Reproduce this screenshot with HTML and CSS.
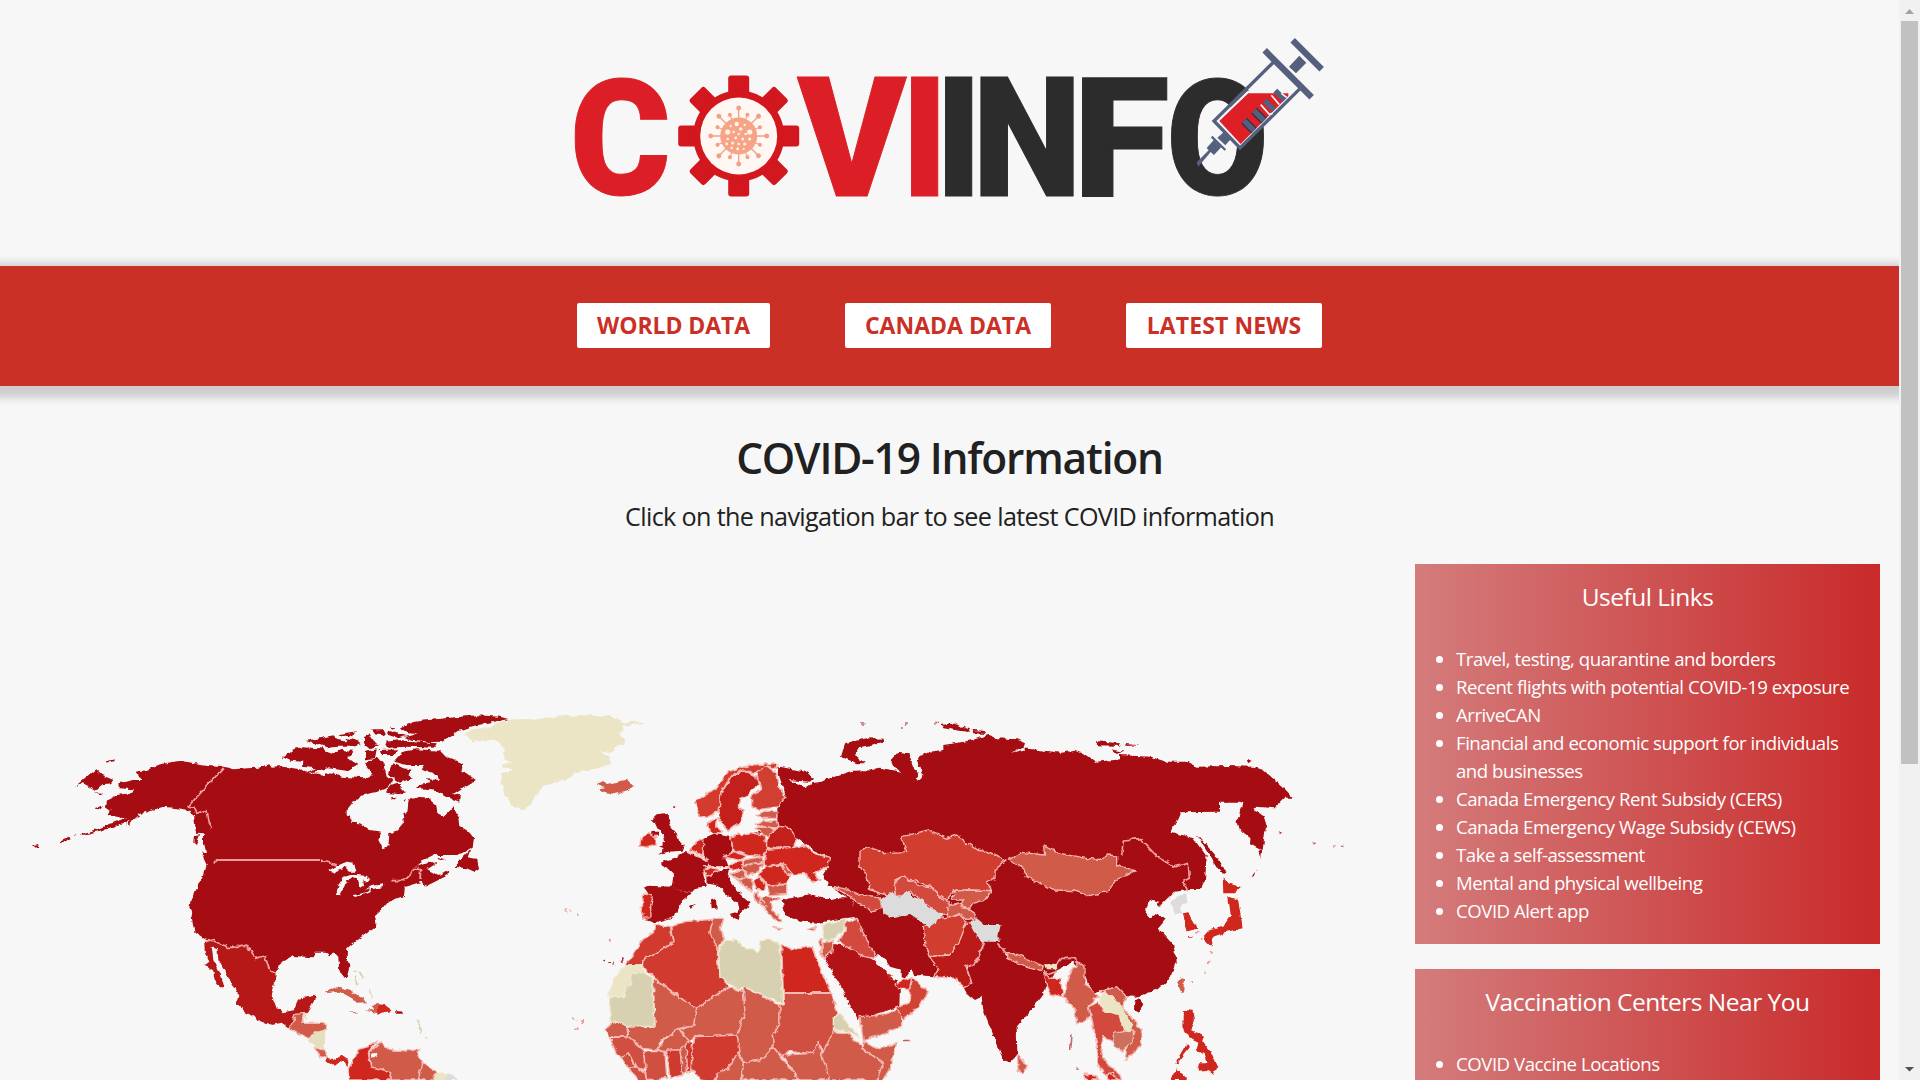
FILE: index.html
```html
<!DOCTYPE html>
<html lang="en">
<head>
<meta charset="utf-8">
<title>COVIINFO</title>
<link rel="stylesheet" href="styles.css">
</head>
<body>
<div class="page">
<header class="header">
<svg class="logo" viewBox="575 30 749 175" role="img" aria-label="COVIINFO">
  <g class="logo-letters logo-red">
    <text transform="translate(570 194) scale(.92 .967)">C</text>
    <text transform="translate(797.5 195.500) scale(.985 1)">V</text>
    <text transform="translate(901.500 195.500) scale(.92 1)">I</text>
  </g>
  <g class="logo-letters logo-black">
    <text transform="translate(935.500 195.500) scale(.92 1)">I</text>
    <text transform="translate(972.500 195.500) scale(.93 1)">N</text>
    <text transform="translate(1073 195.500) scale(1.06 1)">F</text>
    <text transform="translate(1166.500 194) scale(.885 .967)">O</text>
  </g>
  <g transform="translate(738.7 136)">
    <g fill="#d3171e">
      <g id="teeth"><rect x="-10.5" y="-60.5" width="21" height="121" rx="3"/><rect x="-60.5" y="-10.5" width="121" height="21" rx="3"/></g>
      <use href="#teeth" transform="rotate(45)"/>
      <circle r="45.5"/>
    </g>
    <circle r="38.5" fill="#fff7f3"/>
    <g stroke="#f0a184" stroke-width="1.3" fill="#f0a184">
      <g id="spike"><path d="M0-28V28M-28 0H28"/><circle cy="-28" r="1.8"/><circle cy="28" r="1.8"/><circle cx="-28" r="1.8"/><circle cx="28" r="1.8"/></g>
      <use href="#spike" transform="rotate(45)"/>
      <use href="#spike" transform="rotate(22.5) scale(.82)"/>
      <use href="#spike" transform="rotate(67.5) scale(.82)"/>
    </g>
    <circle r="18.5" fill="#f6a386"/>
    <g fill="#fff3e8"><circle cx="-11" cy="-4" r="2.6"/><circle cx="11" cy="-4" r="2.6"/><circle cx="-2" cy="-12" r="2.2"/><circle cx="2" cy="-7" r="1.8"/><circle cx="-5" cy="-4" r="1.2"/><circle cx="6" cy="-11" r="1.2"/><circle cx="-8" cy="-10" r="1.2"/><circle cx="7" cy="-2" r="1.3"/><circle cx="0" cy="-2" r="1.2"/><circle cx="-3" cy="2" r="1.4"/><circle cx="4" cy="3" r="1.5"/><circle cx="-11" cy="3" r="1.3"/><circle cx="11" cy="3" r="1.5"/><circle cx="-12" cy="8" r="1.4"/><circle cx="-6" cy="7" r="1.5"/><circle cx="0" cy="8" r="1.3"/><circle cx="6" cy="8" r="1.6"/><circle cx="-1" cy="13" r="1.4"/><circle cx="-7" cy="12" r="1.2"/><circle cx="5" cy="13" r="1.1"/></g>
  </g>
  <g transform="translate(940 20) scale(.33333)" fill="#55607f">
    <path fill="#f7f7f7" d="M1005 130L1082 205 1050 232 925 218Z"/>
    <path fill="none" stroke="#f7f7f7" stroke-width="12" d="M838 303L925 218H1020L1045 225 900 372Z"/>
    <path fill="#de1f26" d="M838 303L925 220H1045L1045 228 902 372Z"/>
    <path fill="none" stroke="#55607f" stroke-width="10" d="M1003 124L822 303 900 384 1080 206"/>
    <path fill="none" stroke="#353449" stroke-width="24" d="M912 302L942 332M942 272L972 302"/>
    <path fill="none" stroke="#55607f" stroke-width="16" d="M912 302L942 332M942 272L972 302M974 242L1002 270M1006 212L1034 240"/>
    <path fill="none" stroke="#f7f7f7" stroke-width="5" d="M962 254L988 283 998 280M994 226L1018 254M1024 220L1040 232"/>
    <path fill="none" stroke="#55607f" stroke-width="19" d="M974 91L1115 232M1058 61L1145 148"/>
    <path d="M1078 107L1099 128 1068 160 1047 140Z"/>
    <path d="M851 337L872 358 856 376 832 353Z"/>
    <path fill="none" stroke="#55607f" stroke-width="7" d="M815 350L856 390"/>
    <path d="M822 359L844 381 822 405 812 396 775 440 770 427 806 391 800 384Z"/>
  </g>
</svg>
</header>

<nav class="nav">
  <a class="nav-link nav-world">WORLD DATA</a>
  <a class="nav-link nav-canada">CANADA DATA</a>
  <a class="nav-link nav-news">LATEST NEWS</a>
</nav>

<main>
<h1 class="title">COVID-19 Information</h1>
<p class="subtitle">Click on the navigation bar to see latest COVID information</p>
<div class="columns">
<svg class="map" viewBox="0 564 1380 516" role="img" aria-label="World map of COVID-19 cases">
  <defs>
    <filter id="coast" filterUnits="userSpaceOnUse" x="0" y="564" width="1380" height="516" color-interpolation-filters="sRGB">
      <feTurbulence type="fractalNoise" baseFrequency=".16" numOctaves="2" seed="4"/>
      <feDisplacementMap in="SourceGraphic" scale="5" xChannelSelector="R" yChannelSelector="G"/>
    </filter>
  </defs>
  <g filter="url(#coast)">
  <!-- North America -->
  <g transform="translate(0 700) scale(.33333)">
    <g class="dark">
      <path d="M410 215L440 210 475 195 510 187 545 182 575 188 620 195 665 198 700 208 740 205 775 203 808 193 815 203 850 200 900 208 915 218 960 222 970 232 980 220 1010 222 1025 230 1095 235 1120 225 1090 190 1135 172 1150 190 1160 230 1180 240 1165 262 1130 276 1090 285 1060 305 1040 330 1040 345 1050 350 1052 368 1080 370 1110 390 1143 395 1135 420 1148 445 1165 438 1168 400 1195 390 1212 370 1208 345 1222 335 1225 305 1235 293 1255 290 1285 293 1308 312 1312 340 1330 348 1360 322 1375 350 1378 380 1410 400 1422 415 1418 440 1395 455 1365 465 1300 465 1265 483 1250 500 1290 483 1312 486 1290 510 1315 525 1348 512 1345 525 1275 560 1265 545 1215 560 1212 587 1165 605 1145 630 1128 645 1125 680 1100 700 1070 720 1042 745 1040 770 1048 800 1040 830 1030 834 1017 805 1015 770 1005 760 985 766 975 758 945 758 938 772 880 768 840 790 830 822 810 815 795 770 765 775 750 745 720 735 685 742 640 722 612 715 583 695 578 670 574 640 568 625 572 600 585 570 610 530 620 495 603 458 618 455 612 430 612 400 588 398 582 345 565 330 530 325 490 320 430 338 370 366 350 372 375 355 322 345 332 332 315 320 318 300 350 285 400 278 405 268 357 265 355 250 400 240 425 240Z"/>
      <path d="M224 260L286 208 305 225 340 240 333 250 308 253 284 272 262 258 245 250ZM318 183L345 178 343 184 320 188ZM282 280L310 281 300 286ZM282 325L305 318 300 330ZM240 403L300 384 360 360 415 342 418 348 385 374 375 376 390 362 310 390 245 406ZM430 332L470 312 485 312 440 338ZM176 423L212 408 214 414 180 427ZM100 435L115 432 114 439 102 440ZM220 407L230 405 226 409ZM582 406L597 403 588 435 580 428Z"/>
      <path d="M848 172L880 148 905 142 960 145 1000 160 1025 150 1060 152 1045 175 1075 195 1045 213 985 205 905 222 945 205 908 200 910 185 870 182ZM920 123L1000 106 1015 120 1085 133 1060 140 1010 140 985 143ZM1013 103L1072 94 1045 112ZM1035 125L1055 112 1085 135ZM1092 108L1105 103 1118 125 1140 135 1110 145 1092 130ZM1110 88L1150 88 1158 104 1125 100ZM1165 95L1190 100 1220 108 1195 115 1165 105ZM1200 82L1240 66 1265 62 1350 53 1430 46 1500 50 1525 57 1480 66 1420 78 1370 95 1330 125 1290 126 1265 122 1240 120 1215 112 1250 103 1225 100 1210 92ZM1155 125L1200 120 1310 130 1305 143 1220 140 1165 143ZM1170 80L1183 82 1175 87ZM1095 155L1130 148 1125 175 1095 178ZM1140 150L1195 148 1180 165 1145 165ZM1210 155L1250 148 1320 152 1335 168 1390 192 1385 210 1428 240 1390 262 1355 285 1380 280 1378 305 1340 290 1300 268 1248 265 1255 255 1292 250 1280 238 1320 240 1300 220 1265 208 1275 195 1220 195 1183 185ZM1180 190L1210 205 1240 210 1225 225 1235 235 1200 248 1165 225ZM1178 250L1190 246 1218 277 1200 283 1155 278ZM1172 292L1190 290 1178 299ZM1208 300L1218 298 1212 306Z"/>
      <path d="M1412 447L1402 475 1432 480 1437 508 1425 516 1400 505 1362 500 1385 475ZM1312 470L1338 478 1320 481ZM1188 933L1210 935 1205 941 1190 941Z"/>
    </g>
    <g fill="#f7f7f7"><path d="M985 512L1010 498 1040 485 1060 488 1070 515 1050 515 1035 502 1003 515ZM1008 585L1015 555 1032 530 1055 524 1100 527 1112 540 1103 545 1090 537 1092 555 1078 565 1070 535 1058 530 1040 545 1020 585ZM1060 586L1105 575 1110 565 1090 570 1115 558 1150 553 1148 562 1115 568 1105 580 1065 592ZM1173 377L1190 372 1182 385ZM1265 480L1300 478 1330 483 1300 488 1320 500 1295 515 1282 508 1310 490Z"/></g>
    <path fill="#b61817" d="M612 720L640 722 685 742 720 735 738 735 750 750 765 775 795 768 810 815 830 822 822 860 815 885 830 925 850 937 885 930 900 895 945 887 947 895 920 940 885 945 870 985 845 968 815 975 780 962 735 935 710 910 715 885 705 865 680 825 655 780 652 745 635 738 640 780 660 825 670 862 660 862 643 840 640 815 615 795 628 785 615 760Z"/>
    <path class="land orange" d="M885 943L915 940 905 970 975 970 980 988 945 998 928 1012 900 1005 870 985ZM943 1043L975 1050 985 1075 960 1070Z"/>
    <path fill="#e6dfbd" d="M980 988L972 1045 945 1040 925 1018 948 998ZM910 945L925 935 918 965Z"/>
    <path class="orange" d="M975 880L1010 862 1050 872 1105 907 1070 908 1050 888 1020 875ZM1048 933L1075 940 1060 943ZM1098 932L1120 930 1113 915 1132 913 1132 940Z"/>
    <path class="red" d="M1132 913L1155 915 1178 932 1145 938 1132 945ZM980 1075L1000 1080 1025 1064 1048 1080 1042 1098 1030 1080 1005 1100 980 1085Z"/>
    <path class="red land" d="M1046 1140L1045 1105 1065 1075 1075 1048 1105 1040 1132 1022 1105 1060 1112 1100 1172 1115 1170 1140Z"/>
    <path class="orange land" d="M1110 1055L1145 1025 1165 1048 1215 1053 1262 1048 1250 1060 1265 1085 1255 1140H1170L1172 1115 1112 1100ZM1265 1085L1308 1118 1300 1140H1255Z"/>
    <circle cx="1124" cy="1064" r="8" fill="#f7f7f7"/>
    <path fill="#ebe5c5" d="M1308 1118L1345 1120 1335 1140H1300Z"/><path fill="#dcdcdc" d="M1345 1120L1378 1140H1335Z"/>
    <path class="border" d="M672 202L564 320 580 325 588 340 618 332 625 370 634 382M960 480L1010 495M648 480L640 492M1173 542H1210L1248 505 1262 510 1260 540M612 722L640 722 685 742H715L740 735 765 775 795 768 810 815 830 822"/>
    <path fill="none" stroke="#ddd3b4" stroke-width="5" d="M1060 812L1070 812M1078 812L1090 835M1066 830L1070 852M1112 868L1115 898M1255 960L1262 1000M1275 1012L1280 1015"/>
  </g>

  <!-- Greenland, Iceland and Atlantic islands -->
  <g transform="translate(440 700) scale(.33333)">
    <path fill="#ebe5c5" d="M73 100L100 88 150 82 180 65 215 58 300 58 325 52 380 48 420 45 500 48 535 55 540 68 580 65 621 66 580 74 545 80 552 90 535 95 550 115 555 135 525 140 525 150 505 158 480 155 510 170 508 192 470 205 400 222 370 240 310 258 285 290 260 330 235 320 215 318 195 285 182 250 185 225 220 208 190 202 188 190 222 190 195 180 188 165 195 150 180 130 150 120 100 125Z"/>
    <path class="orange" d="M470 250L490 240 500 252 558 240 581 258 565 270 525 283 490 275 475 265 492 262Z"/>
    <path fill="none" stroke="#ec9a94" stroke-width="7" d="M374 634h8M391 632h3M408 644h8M506 720h6M396 955h6M408 960h4M427 960v12M403 986h16"/>
    <path fill="none" stroke="#a9202c" stroke-width="6" d="M493 778v6M505 786h8M518 790l6 4M541 785l9-12M700 322h6"/>
  </g>

  <!-- Russia and China -->
  <g class="dark" transform="translate(860 700) scale(.33333)">
    <path d="M-262 204L-240 200 -165 215 -138 233 -150 245 -190 242 -215 240 -175 255 -165 265 -140 248 -115 245 -100 238 -60 225 -20 212 30 210 60 203 125 215 100 200 92 180 115 155 145 160 160 200 175 225 165 240 190 225 170 180 205 155 250 150 250 135 330 122 385 105 410 115 470 118 495 130 490 145 605 158 640 152 670 160 705 185 780 178 780 165 870 170 920 185 980 185 1010 200 1100 198 1180 200 1210 210 1268 260 1300 293 1275 293 1243 325 1190 320 1180 330 1215 380 1208 445 1135 385 1130 365 1150 310 1140 305 1080 305 1080 335 960 337 935 395 1000 415 1040 470 1035 540 1020 570 985 570 945 575 900 620 880 615 870 600 855 630 920 655 895 685 940 735 950 780 930 835 890 870 830 890 780 888 720 870 700 882 675 830 640 785 590 810 550 880 520 920 470 980 472 1060 450 1087 430 1080 370 930 365 890 345 900 320 880 310 860 325 800 240 830 165 825 155 808 135 835 110 828 75 780 40 765 0 700 -20 640 -20 605 -55 585 -90 560 -115 520 -95 498 -92 472 -140 450 -190 415 -210 385 -248 382 -248 325 -222 290 -250 205Z"/>
    <path d="M-57 170L-45 130 20 115 75 116 70 125 0 142 -15 165 15 190 -10 190ZM245 75L275 68 330 88 325 96 250 85ZM338 90L370 92 380 102 340 100ZM705 123L780 130 775 138 710 136ZM795 132L840 136 800 138ZM755 148L795 155 770 162ZM1160 180L1175 182 1165 190ZM1010 403L1075 475 1100 520 1080 515 1025 430ZM1195 455L1205 445 1200 475ZM1172 530L1182 515 1180 528ZM1252 392L1270 400 1260 398ZM823 905L835 895 850 912 838 938 822 930Z"/>
    <path d="M1208 345L1218 378 1208 450 1170 430 1180 330Z"/>
    <path fill="none" stroke="#c86c73" stroke-width="5" d="M0 72h14M120 84h8M134 72h10M225 68h12M1358 427h12M1420 438h4M1442 440h8M636 1005l-4 45M652 1100v6M1190 510l2 4"/>
    <path fill="#f7f7f7" d="M145 160L162 163 190 228 170 243 178 218ZM452 158L490 140 498 148ZM852 630L880 600 896 605 890 625 915 650 880 645 870 655ZM-50 205L-10 190 45 206 40 212Z"/>
  </g>

  <!-- Europe, Africa and the Middle East -->
  <g transform="translate(600 740) scale(.33333)">
    <g class="dark">
      <path d="M155 240L170 226 200 222 214 238 208 255 230 280 238 305 255 315 248 335 205 338 175 347 190 332 178 318 195 305 190 285 172 265 165 250ZM182 368L225 352 260 333 300 355 325 365 310 400 318 440 285 443 270 460 215 440 220 405ZM128 445L145 437 215 440 273 462 240 490 225 530 180 543 165 550 130 535 140 460ZM305 300L345 283 390 290 398 330 375 350 385 378 325 380 310 340ZM318 400L350 392 390 388 385 415 410 450 452 490 440 500 425 515 415 542 385 525 412 520 420 495 380 465 350 435 320 430ZM333 478L348 473 350 505 335 508ZM456 280L482 275 475 290ZM265 497L285 492 272 503ZM158 275h16v12h-20Z"/>
      <path d="M548 480L630 462 680 475 755 475 768 530 700 540 660 548 600 545 555 525Z"/>
      <path d="M763 500L795 520 840 520 900 535 910 690 870 680 830 640 800 590 775 540Z"/>
      <path fill="#b11317" d="M665 640L700 612 750 620 820 660 870 700 900 735 898 800 830 822 775 840 745 785 720 735Z"/>
    </g>
    <path class="water" d="M830 645L850 650 870 680 905 690 905 730 880 720 860 700Z"/>
    <path fill="#cf261d" d="M862 700L878 705 870 725ZM878 735L905 730 905 748Z"/>
    <path class="water" d="M560 470L570 430 600 397 650 420 700 440 722 465 690 478 630 462ZM635 405L670 395 665 412Z"/>
    <g class="land red">
      <path d="M122 318L128 290 150 278 168 292 168 315 145 322Z"/><path d="M130 462L160 465 152 500 153 533 125 535Z"/>
      <path fill="#d43a2d" d="M286 182L320 160 350 145 385 95 450 75 530 70 530 85 500 78 470 100 430 90 390 110 360 165 362 210 325 232 298 230Z"/>
      <path fill="#c4201b" d="M362 165L390 115 430 92 470 108 475 135 450 150 445 165 420 175 415 200 430 215 418 250 385 272 355 235Z"/>
      <path fill="#d13e32" d="M470 98L500 78 530 100 538 145 558 170 535 200 480 208 455 200 455 170 485 145 475 120Z"/>
      <path d="M323 250L352 232 350 262 368 275 345 282 328 275ZM270 328L300 298 312 300 308 350ZM392 290L450 278 492 285 500 330 490 350 440 345 400 330Z"/>
      <path fill="#c4201b" d="M495 320L508 285 535 262 570 265 590 295 580 322 510 325Z"/>
      <path d="M492 370L500 328 580 322 610 315 640 340 688 352 685 378 640 400 660 420 635 425 615 400 575 405 540 370 500 378ZM478 405L495 378 540 375 570 405 560 432 500 435ZM370 350L400 335 440 348 420 362ZM380 385L400 368 430 365 425 390ZM312 392L330 382 355 390 340 402 318 408ZM460 422L475 410 495 435 490 450 470 448Z"/>
    </g>
    <g class="land orange">
      <path d="M470 225L495 213 530 215 530 235 490 235ZM465 252L490 240 530 245 535 262 510 265ZM465 262L500 262 525 270 505 292 480 275ZM430 360L485 350 490 365 430 375ZM425 390L430 375 490 368 475 395 445 405ZM390 402L425 392 440 410 405 415ZM410 418L440 412 460 425 455 450ZM500 435L560 435 560 460 510 465ZM475 480L500 470 545 475 510 485 515 505 545 545 530 545 500 515ZM462 462L475 455 480 490 470 490ZM518 560L550 563 540 568ZM622 570L650 560 640 572ZM540 368L555 375 575 400 565 408Z"/>
      <path fill="#d14a3d" d="M700 440L745 448 780 465 840 470 845 505 820 515 775 490 750 470ZM715 605L735 575 738 545 770 535 795 590 825 640 825 655 790 650Z"/>
      <path d="M665 610L700 600 695 640 670 655 660 645ZM655 600L665 600 668 650Z"/>
      <path fill="#d03a2f" d="M127 660L155 645 190 625 222 605 215 560 255 545 340 538 330 575 350 610 355 690 385 740 290 805 270 795 165 715 130 680ZM75 675L100 650 120 605 160 578 165 555 210 562 222 605 180 630 130 658 127 675Z"/>
      <path d="M340 535L368 535 360 570 372 590 355 630 330 580ZM160 715L270 795 290 805 285 855 235 862 180 905 170 930 130 925 85 890 85 862 165 858Z"/>
      <path d="M290 805L385 742 430 755 435 820 410 885 350 892 290 885 265 905 238 865 285 855ZM430 740L540 795 540 850 518 890 520 920 480 960 435 970 415 930 412 880 435 820Z"/>
      <path fill="#d04f40" d="M550 760L695 760 715 825 700 880 670 940 655 905 640 940 565 935 545 950 520 920 518 890 540 850 540 795 550 790Z"/>
      <path class="red" d="M545 615L580 628 635 620 655 670 692 758 550 758Z"/>
      <path d="M700 875L745 880 785 920 850 970 830 1020H690L660 970 670 935ZM780 830L850 825 905 805 905 860 790 903ZM790 905L830 925 890 910 870 985 845 1025H825L850 970 785 925Z"/>
      <path d="M430 970L480 960 520 922 550 960 600 1020H425ZM548 945L640 940 655 905 665 945 690 1020H600Z"/>
      <path fill="#d03a2f" d="M285 890L350 888 410 885 420 930 385 985 350 1000 340 1025 305 1020 275 990 275 940Z"/>
      <path d="M350 1000L385 985 415 935 430 970 420 1025H345ZM170 930L200 895 235 865 265 905 270 925 200 935ZM15 870L45 840 80 858 85 890 30 890Z"/>
      <path fill="#d04f40" d="M30 895L85 890 130 930 135 990 105 980 85 940 65 955 45 930ZM65 955L85 938 105 975 85 985ZM85 985L105 975 135 1000 140 1022 120 1022ZM132 935H195L200 1015 140 1022 135 985Z"/>
      <path fill="#cf3a2e" d="M200 930H240L248 1005 210 1015ZM258 905L278 910 272 990 262 998Z"/>
      <path d="M240 930L258 912 262 998 248 1005Z"/>
    </g>
    <g stroke="#efe9cf" stroke-width="4" fill="#d8d1b1">
      <path d="M355 640L375 600 405 600 430 620 475 635 480 605 510 598 540 615 548 790 432 740 415 748 360 710ZM30 772H72L75 740 90 735 92 700 128 695 160 715 158 730 165 858 85 860 50 842 30 848ZM668 555L735 535 730 575 685 605 670 600ZM700 835L722 820 740 850 782 895 745 875 700 870Z"/>
      <path fill="#ebe5c5" d="M22 770L45 715 75 675H128V698H92V735L75 742 72 770Z"/>
    </g>
    <path fill="none" stroke="#f4b9b4" stroke-width="4" d="M400 410L455 455M480 470L500 500M305 345L325 362M310 380L385 380M270 335L320 365"/>
  </g>

  <!-- Central and South-East Asia -->
  <g transform="translate(860 700) scale(.33333)">
    <g class="land orange">
      <path fill="#d13e30" d="M0 455L25 440 70 458 140 455 125 410 165 400 205 390 260 415 290 405 350 450 385 455 438 480 405 510 405 535 380 545 395 572 320 570 280 575 260 600 210 558 125 530 105 540 108 590 60 580 30 570 20 530 0 500Z"/>
      <path d="M105 540L130 530 180 558 215 560 250 600 268 605 265 640 240 645 150 575 110 590Z" fill="#d14a3d"/>
      <path d="M285 575L320 570 395 572 375 600 340 610 330 625 300 620 310 600 275 600ZM260 620L300 610 345 640 345 655 320 658 300 640 265 655Z"/>
      <path d="M445 480L485 457 555 465 550 438 600 460 680 475 720 478 745 465 770 468 770 495 825 512 790 530 765 540 745 575 685 587 640 572 580 570 500 530 490 505Z"/>
      <path fill="#d13e30" d="M190 680L240 655 300 645 318 665 305 715 270 765 208 770 195 740Z"/>
      <path fill="#ba1b19" d="M208 770L270 765 300 720 320 670 340 665 345 700 370 725 350 785 318 800 335 850 310 860 285 835 220 830 235 805Z"/>
      <path fill="#d14335" d="M155 830L205 875 180 920 130 958 110 925 148 905 150 860Z"/><path class="red" d="M105 852L155 830 148 868 115 868Z"/>
      <path d="M440 758L460 758 550 798 545 812 510 805 440 775Z"/><path class="red" d="M550 815L570 835 600 835 610 890 570 882 560 850Z"/>
      <path d="M612 890L630 820 655 785 675 800 675 850 715 888 685 915 690 950 650 972 645 930ZM472 1060L502 1100 485 1120 474 1110Z"/>
      <path d="M720 875L770 860 800 890 785 920 845 990 840 1040 795 1080 800 1045 825 1000 780 930Z"/>
      <path fill="#d14a3d" d="M688 920L715 905 735 940 780 930 810 995 770 1000 760 1025 730 1010 722 1060 740 1085 780 1125 785 1140H745L710 1090 712 1040Z"/>
      <path fill="#cd6f5d" d="M758 1000L820 990 820 1025 785 1055 765 1035Z"/>
      <path class="red" d="M672 1122L710 1128 720 1140H680ZM738 1125L760 1120 775 1140H745Z"/>
    </g>
    <path fill="#dcdcdc" d="M62 598L95 575 115 592 140 573 160 592 190 600 200 620 250 645 225 668 205 685 190 668 150 642 95 652 70 640ZM325 665L350 655 375 675 422 675 415 705 420 725 370 725 350 710Z"/>
    <path fill="#ebe5c5" d="M552 792L590 795 592 808 558 808ZM715 890L735 875 770 900 790 930 820 975 810 998 790 990 775 945 735 940Z"/>
    <path class="border" d="M785 468L790 420 840 416 890 468 945 500 985 490 988 535 968 545 985 575M412 730L440 758M552 815L560 825 590 815M590 795L605 775 640 775 655 790M370 728L352 785 318 800 335 848"/>
    <g class="red">
      <path d="M1088 532L1105 550 1145 562 1125 580 1090 580ZM1105 590L1135 600 1148 685 1125 690 1100 695 1060 710 1055 742 1028 715 1050 690 1090 680 1112 645ZM965 640L985 637 1012 685 980 695ZM985 708h12v5h-12Z"/>
      <path d="M972 930L998 932 1002 960 992 990 1035 1010 1030 1025 1055 1060 1072 1100 1060 1122 1040 1110 1015 1112 1020 1090 1045 1090 1035 1065 1010 1050 1015 1025 985 1010 970 980ZM980 1030L985 1048 952 1090 946 1088ZM930 1140L950 1105 980 1135V1140Z"/>
    </g>
    <path class="orange" d="M952 850L962 832 972 835 970 870 965 880ZM132 1019h16v5h-16Z"/>
    <path fill="#dcdcdc" d="M930 605L978 578 982 605 960 620 965 638 945 645 938 620Z"/>
    <path fill="none" stroke="#e89992" stroke-width="6" d="M1055 750v8M1050 785l-5 10M1038 812l-2 8M994 846h8M1012 695h6M1020 720h4"/>
  </g>
  </g>
  <path class="parallel" d="M216 860H320"/>
</svg>

<aside class="sidebar">
  <section class="card">
    <h2 class="card-title useful">Useful Links</h2>
    <ul class="links">
      <li>Travel, testing, quarantine and borders</li>
      <li>Recent flights with potential COVID-19 exposure</li>
      <li>ArriveCAN</li>
      <li>Financial and economic support for individuals and businesses</li>
      <li>Canada Emergency Rent Subsidy (CERS)</li>
      <li>Canada Emergency Wage Subsidy (CEWS)</li>
      <li>Take a self-assessment</li>
      <li>Mental and physical wellbeing</li>
      <li>COVID Alert app</li>
    </ul>
  </section>
  <section class="card">
    <h2 class="card-title">Vaccination Centers Near You</h2>
    <ul class="links"><li>COVID Vaccine Locations</li></ul>
  </section>
</aside>
</div>
</main>
</div>
<div class="scrollbar">
  <svg class="arrow" viewBox="0 0 21 21"><path d="M6 14L10.500 9 15 14Z" fill="#a3a3a3"/></svg>
  <div class="thumb"></div>
  <svg class="arrow arrow-down" viewBox="0 0 21 21"><path d="M6 8L10.500 12.500 15 8Z" fill="#505050"/></svg>
</div>
</body>
</html>
```
FILE: styles.css
```css
* { box-sizing: border-box; }
body {
  margin: 0;
  height: 1080px;
  overflow: hidden;
  display: flex;
  background: #f7f7f7;
  color: #212121;
  font-family: "Open Sans", "Noto Sans", sans-serif;
}
.page { flex: 1; min-width: 0; height: 1080px; overflow: hidden; }
.header { height: 266px; padding-top: 30px; display: flex; justify-content: center; align-items: flex-start; }
.logo { width: 749px; height: 175px; overflow: visible; }
.logo-letters { font-family: Roboto, sans-serif; font-weight: 900; font-size: 167px; }
.logo-red { fill: #dc1f26; stroke: #dc1f26; }
.logo-black { fill: #2c2c2c; stroke: #2c2c2c; }
.nav {
  position: relative;
  height: 120px;
  display: flex;
  justify-content: center;
  align-items: center;
  gap: 75px;
  padding-bottom: 1px;
  background: #cb3027;
  box-shadow: 0 4.5px 8px 7.5px rgba(0, 0, 0, .17);
}
.nav-link {
  height: 45px;
  line-height: 45px;
  text-align: center;
  white-space: nowrap;
  background: #fff;
  border-radius: 2px;
  color: #cb3027;
  font-size: 23px;
  font-weight: 700;
}
.nav-world { width: 193px; letter-spacing: -.1px; }
.nav-canada { width: 206px; letter-spacing: 0; }
.nav-news { width: 196px; letter-spacing: .1px; }
.title {
  margin: 43px 0 0;
  text-align: center;
  font-size: 42.500px;
  font-weight: 600;
  line-height: 58px;
  letter-spacing: -1.2px;
}
.subtitle { margin: 10px 0 0; text-align: center; font-size: 25.200px; line-height: 38px; letter-spacing: -.65px; }
.columns { display: flex; justify-content: space-between; align-items: flex-start; margin-top: 29px; padding-right: 19px; }
.map { width: 1380px; height: 516px; }
.dark { fill: #a60d13; }
.red { fill: #cf261d; }
.orange { fill: #d15b49; }
.water { fill: #f7f7f7; }
.land { stroke: #f4b9b4; stroke-width: 4; stroke-linejoin: round; }
.border { fill: none; stroke: #f0a5a3; stroke-width: 5; stroke-linejoin: round; }
.parallel { stroke: #ec9c9c; stroke-width: 2; }
.sidebar { width: 465px; display: flex; flex-direction: column; gap: 25px; }
.card { padding: 15px 18px 19px; color: #fff; background: linear-gradient(90deg, #d47c7c, #c92a2a); }
.card-title { margin: 0; height: 66px; text-align: center; font-size: 24.500px; font-weight: 400; line-height: 36px; letter-spacing: -.5px; }
.links { margin: 0; padding: 0 0 0 23px; font-size: 18.600px; line-height: 28px; letter-spacing: -.46px; }
.links li { white-space: normal; margin-right: -8px; }
.scrollbar { width: 21px; height: 1080px; display: flex; flex-direction: column; align-items: center; background: #f1f1f1; }
.arrow { width: 21px; height: 21px; flex: none; }
.thumb { width: 17px; height: 743px; background: #c1c1c1; }
.arrow-down { margin-top: auto; }
```
